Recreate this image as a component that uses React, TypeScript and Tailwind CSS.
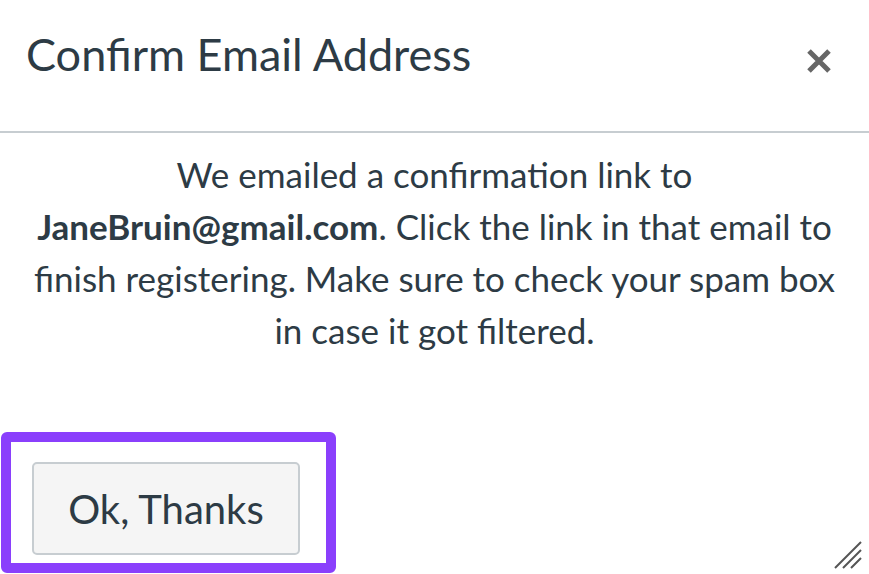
import React from 'react'

export default function App() {
  return (
    <div className="relative h-[574px] w-[869px] overflow-hidden bg-white font-['Lato',sans-serif] text-[#2d3b45]">
      <header className="flex h-[133px] items-center justify-between border-b-2 border-[#c7cdd1] pb-[22px] pl-[26px] pr-[37px]">
        <h1 className="text-[45px] font-normal leading-none">Confirm Email Address</h1>
        <button className="mt-[12px] text-[#666666]" aria-label="Close">
          <svg width="26" height="26" viewBox="0 0 26 26">
            <path d="M3 3 L23 23 M23 3 L3 23" stroke="currentColor" strokeWidth="5" strokeLinecap="butt" />
          </svg>
        </button>
      </header>

      <p className="mx-auto mt-[15px] w-[820px] text-center text-[35px] leading-[52px]">
        We emailed a confirmation link to <strong className="font-bold">JaneBruin@gmail.com</strong>. Click the
        link in that email to finish registering. Make sure to check your spam box in case it got filtered.
      </p>

      <div className="absolute bottom-[1px] left-[1px] flex h-[141px] w-[335px] items-center rounded-[6px] border-[10px] border-[#8a3ffc] pl-[21px] pt-[12px]">
        <button className="flex h-[93px] w-[268px] items-center justify-center rounded-[5px] border-2 border-[#c7cdd1] bg-[#f5f5f5] text-[40px] text-[#2d3b45]">
          Ok, Thanks
        </button>
      </div>

      <svg className="absolute bottom-[4px] right-[6px]" width="30" height="30" viewBox="0 0 30 30">
        <path d="M2 28 L28 2 M10 28 L28 10 M18 28 L28 18" stroke="#555" strokeWidth="2" />
      </svg>
    </div>
  )
}
